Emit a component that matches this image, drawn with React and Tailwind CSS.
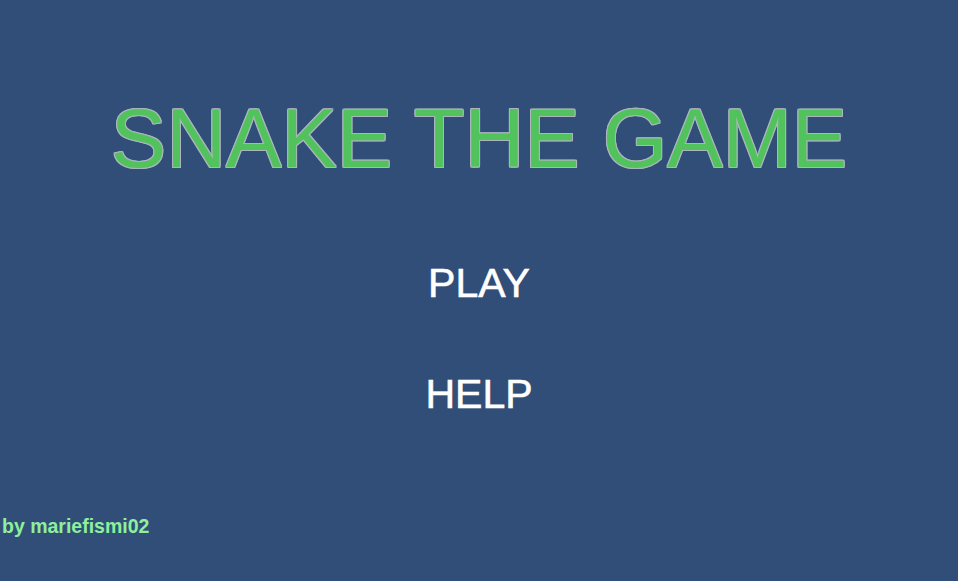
export default function App() {
  return (
    <div className="w-full h-[581px] bg-[#314e79] flex flex-col overflow-hidden" style={{ fontFamily: '"Liberation Sans", Arial, sans-serif' }}>
      <div className="pt-[92px] flex justify-center">
        <h1
          className="text-[83px] leading-[94px] text-[#52c35c] [text-shadow:1px_0_0_#aab6bd,-1px_0_0_#aab6bd,0_1px_0_#aab6bd,0_-1px_0_#aab6bd,1px_1px_0_#aab6bd,-1px_-1px_0_#aab6bd,1px_-1px_0_#aab6bd,-1px_1px_0_#aab6bd]"
        >
          SNAKE THE GAME
        </h1>
      </div>
      <div className="flex flex-col items-center mt-[74px] gap-[65px]">
        <button className="text-[41px] leading-[46px] text-white [-webkit-text-stroke:0.6px_white]">PLAY</button>
        <button className="text-[41px] leading-[46px] text-white [-webkit-text-stroke:0.6px_white]">HELP</button>
      </div>
      <div className="mt-auto mb-[44px] pl-[2px] text-[19.5px] leading-[22px] font-bold text-[#8ef09a]">
        by mariefismi02
      </div>
    </div>
  )
}
